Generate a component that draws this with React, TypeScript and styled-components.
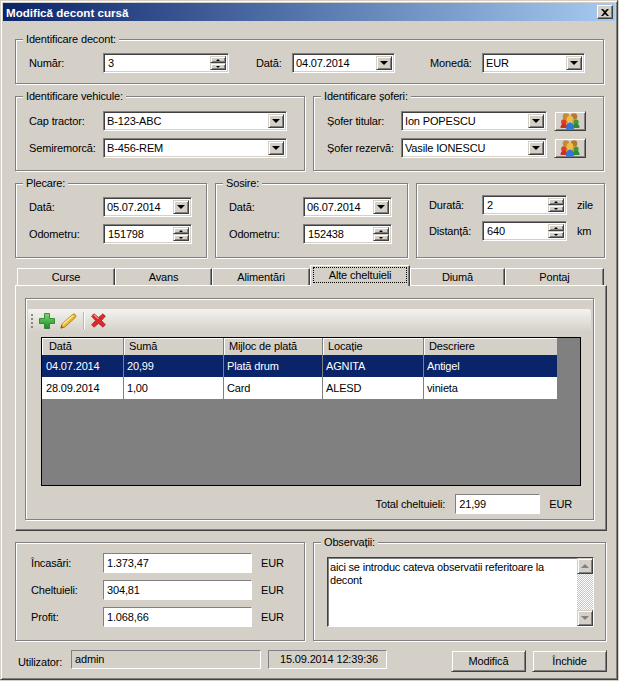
import React from 'react'
import styled, { createGlobalStyle } from 'styled-components'

const rows = [
  ['04.07.2014', '20,99', 'Plată drum', 'AGNITA', 'Antigel'],
  ['28.09.2014', '1,00', 'Card', 'ALESD', 'vinieta'],
]
const columns = ['Dată', 'Sumă', 'Mijloc de plată', 'Locație', 'Descriere']
const tabs = [
  { name: 'Curse', w: 98 },
  { name: 'Avans', w: 97 },
  { name: 'Alimentări', w: 98 },
  { name: 'Alte cheltuieli', w: 100, active: true },
  { name: 'Diumă', w: 95 },
  { name: 'Pontaj', w: 99 },
]

const SpinBox = ({ w, value }: { w: number; value: string }) => (
  <Field $w={w}>
    <FieldText $left={2}>{value}</FieldText>
    <SpinButtons>
      <SpinButton><Arrow $up /></SpinButton>
      <SpinButton><Arrow /></SpinButton>
    </SpinButtons>
  </Field>
)

const Combo = ({ w, value }: { w: number; value: string }) => (
  <Field $w={w}>
    <FieldText $left={1}>{value}</FieldText>
    <DropButton><DropArrow /></DropButton>
  </Field>
)

const PeopleIcon = () => (
  <svg width="20" height="18" viewBox="0 0 20 18">
    <circle cx="6" cy="4.500" r="3.300" fill="#c48a34" />
    <circle cx="14" cy="4.500" r="3.300" fill="#b27a2e" />
    <path d="M2 11c0-2.500 1.500-4 3.500-4H8v6H3z" fill="#e0a424" />
    <path d="M12 7h2.500c2 0 3.500 1.500 3.500 4l-1 2h-5z" fill="#d0a42a" />
    <circle cx="3.800" cy="10" r="2.700" fill="#de3d2c" />
    <path d="M.5 16c0-3 1.200-4.500 3.300-4.500S7.500 13 7.500 16z" fill="#cf2f22" />
    <circle cx="16.200" cy="10" r="2.500" fill="#3f9a3a" />
    <path d="M12.500 16c0-3 1.400-4.500 3.700-4.500S19.500 13 19.500 16z" fill="#2f8a32" />
    <circle cx="10" cy="7" r="3.200" fill="#f3bb4a" />
    <path d="M6 17.500c0-4.500 1.700-7 4-7s4 2.500 4 7z" fill="#2f78d8" />
  </svg>
)

const PlusIcon = () => (
  <svg width="16" height="16" viewBox="0 0 16 16">
    <defs>
      <linearGradient id="plusFill" x1="0" y1="0" x2="0" y2="1">
        <stop offset="0" stopColor="#7fd86a" />
        <stop offset="1" stopColor="#1a8a2a" />
      </linearGradient>
    </defs>
    <path
      d="M5.500 .5h5v5h5v5h-5v5h-5v-5h-5v-5h5z"
      fill="url(#plusFill)"
      stroke="#1f7a2c"
      strokeWidth=".8"
    />
  </svg>
)

const PencilIcon = () => (
  <svg width="17" height="16" viewBox="0 0 17 16">
    <path d="M.8 15.200l1-3.900L12.300 1.700c.9-.8 2.200-.8 3 0s.8 2 0 2.800L4.700 14.200z" fill="#eab92e" stroke="#a87e14" strokeWidth=".9" />
    <path d="M3 11.500L13 2.500" stroke="#fff2b0" strokeWidth="1.100" fill="none" />
    <path d="M.8 15.200l.7-2.700 1.900 2z" fill="#7a5a14" />
  </svg>
)

const DeleteIcon = () => (
  <svg width="15" height="15" viewBox="0 0 15 15">
    <path
      d="M3 .8L7.500 4.500 12 .8l2.400 2.400-3.900 4.300 3.900 4.300-2.400 2.400-4.500-3.700L3 14.200.6 11.800l3.900-4.300L.6 3.200z"
      fill="#dc2a2a"
      stroke="#b01c1c"
      strokeWidth=".7"
    />
    <path d="M3 2l4.500 3.800" stroke="#f49a9a" strokeWidth="1.100" fill="none" />
  </svg>
)

export default function App() {
  return (
    <>
      <GlobalStyle />
      <Window>
        <TitleBar>
          <span>Modifică decont cursă</span>
          <CloseButton>
            <svg width="8" height="7" viewBox="0 0 8 7">
              <path d="M0 0l2 0 2 2 2-2 2 0-3 3.500 3 3.500-2 0-2-2-2 2-2 0 3-3.500z" fill="#000" />
            </svg>
          </CloseButton>
        </TitleBar>
        <Content>
          <Row $top={18}>
            <Group $w={589} $h={45} $top={13}>
              <Legend>Identificare decont:</Legend>
              <FieldRow>
                <Label $w={74}>Număr:</Label>
                <SpinBox w={126} value="3" />
                <Label $w={36} $ml={27}>Dată:</Label>
                <Combo w={103} value="04.07.2014" />
                <Label $w={52} $ml={35}>Monedă:</Label>
                <Combo w={103} value="EUR" />
              </FieldRow>
            </Group>
          </Row>
          <Row $top={12}>
            <Group $w={290} $h={75} $top={14}>
              <Legend>Identificare vehicule:</Legend>
              <FieldRow>
                <Label $w={74}>Cap tractor:</Label>
                <Combo w={184} value="B-123-ABC" />
              </FieldRow>
              <FieldRow>
                <Label $w={74}>Semiremorcă:</Label>
                <Combo w={184} value="B-456-REM" />
              </FieldRow>
            </Group>
            <Group $w={291} $h={75} $top={14}>
              <Legend>Identificare șoferi:</Legend>
              <FieldRow>
                <Label $w={74}>Șofer titular:</Label>
                <Combo w={146} value="Ion POPESCU" />
                <PickButton><PeopleIcon /></PickButton>
              </FieldRow>
              <FieldRow>
                <Label $w={74}>Șofer rezervă:</Label>
                <Combo w={146} value="Vasile IONESCU" />
                <PickButton><PeopleIcon /></PickButton>
              </FieldRow>
            </Group>
          </Row>
          <Row $top={12}>
            <Group $w={192} $h={75} $top={13}>
              <Legend>Plecare:</Legend>
              <FieldRow>
                <Label $w={74}>Dată:</Label>
                <Combo w={89} value="05.07.2014" />
              </FieldRow>
              <FieldRow>
                <Label $w={74}>Odometru:</Label>
                <SpinBox w={89} value="151798" />
              </FieldRow>
            </Group>
            <Group $w={193} $h={75} $top={13}>
              <Legend>Sosire:</Legend>
              <FieldRow>
                <Label $w={74}>Dată:</Label>
                <Combo w={89} value="06.07.2014" />
              </FieldRow>
              <FieldRow>
                <Label $w={74}>Odometru:</Label>
                <SpinBox w={89} value="152438" />
              </FieldRow>
            </Group>
            <Group $w={189} $h={75} $top={11} $gap={6} $left={12}>
              <FieldRow>
                <Label $w={53}>Durată:</Label>
                <SpinBox w={85} value="2" />
                <Label $ml={10}>zile</Label>
              </FieldRow>
              <FieldRow>
                <Label $w={53}>Distanță:</Label>
                <SpinBox w={85} value="640" />
                <Label $ml={10}>km</Label>
              </FieldRow>
            </Group>
          </Row>
          <TabStrip>
            {tabs.map((t) => (
              <Tab key={t.name} $w={t.w} $active={t.active}>
                {t.active ? <FocusText>{t.name}</FocusText> : t.name}
              </Tab>
            ))}
          </TabStrip>
          <TabPage>
            <InnerGroup>
              <Toolbar>
                <Grip />
                <ToolIcon><PlusIcon /></ToolIcon>
                <ToolIcon><PencilIcon /></ToolIcon>
                <ToolSeparator />
                <ToolIcon><DeleteIcon /></ToolIcon>
              </Toolbar>
              <DataGrid>
                <GridRow>
                  {columns.map((c) => (
                    <HeadCell key={c}>{c}</HeadCell>
                  ))}
                </GridRow>
                {rows.map((r, i) => (
                  <GridRow key={r[0]}>
                    {r.map((v) => (
                      <Cell key={v} $selected={i === 0}>{v}</Cell>
                    ))}
                  </GridRow>
                ))}
              </DataGrid>
              <TotalRow>
                <Label>Total cheltuieli:</Label>
                <PlainField $w={85} $h={20} $ml={10}>21,99</PlainField>
                <Label $ml={9}>EUR</Label>
              </TotalRow>
            </InnerGroup>
          </TabPage>
          <Row $top={11}>
            <Group $w={290} $h={99} $top={10} $left={15}>
              <FieldRow>
                <Label $w={72}>Încasări:</Label>
                <PlainField $w={149} $h={20}>1.373,47</PlainField>
                <Label $ml={9}>EUR</Label>
              </FieldRow>
              <FieldRow>
                <Label $w={72}>Cheltuieli:</Label>
                <PlainField $w={149} $h={20}>304,81</PlainField>
                <Label $ml={9}>EUR</Label>
              </FieldRow>
              <FieldRow>
                <Label $w={72}>Profit:</Label>
                <PlainField $w={149} $h={20}>1.068,66</PlainField>
                <Label $ml={9}>EUR</Label>
              </FieldRow>
            </Group>
            <Group $w={293} $h={99} $top={14}>
              <Legend>Observații:</Legend>
              <TextArea>
                <TextAreaText>aici se introduc cateva observatii referitoare la decont</TextAreaText>
                <ScrollBar>
                  <ScrollButton><ScrollArrow $up /></ScrollButton>
                  <ScrollButton><ScrollArrow /></ScrollButton>
                </ScrollBar>
              </TextArea>
            </Group>
          </Row>
          <StatusRow>
            <Label $w={46}>Utilizator:</Label>
            <StatusField $w={190}>admin</StatusField>
            <StatusField $w={119} $center>15.09.2014 12:39:36</StatusField>
            <Buttons>
              <PushButton>Modifică</PushButton>
              <PushButton>Închide</PushButton>
            </Buttons>
          </StatusRow>
        </Content>
      </Window>
    </>
  )
}

const GlobalStyle = createGlobalStyle`
  * {
    box-sizing: border-box;
  }
  body {
    margin: 0;
    font-family: 'Liberation Sans', Arial, sans-serif;
    font-size: 11px;
    letter-spacing: -0.150px;
    color: #000;
    background: #d4d0c8;
  }
`

const Window = styled.div`
  width: 618px;
  height: 680px;
  padding: 2px;
  background: #d4d0c8;
  border: 1px solid;
  border-color: #d4d0c8 #404040 #404040 #d4d0c8;
  box-shadow: inset 1px 1px #fff, inset -1px -1px #808080;
  overflow: hidden;
`

const TitleBar = styled.div`
  height: 18px;
  padding: 0 2px 0 3px;
  display: flex;
  align-items: center;
  justify-content: space-between;
  background: linear-gradient(90deg, #0a246a, #a6caf0);
  color: #fff;
  font-size: 11.600px;
  font-weight: bold;
  letter-spacing: 0;
`

const CloseButton = styled.div`
  width: 16px;
  height: 14px;
  display: flex;
  align-items: center;
  justify-content: center;
  background: #d4d0c8;
  border: 1px solid;
  border-color: #fff #404040 #404040 #fff;
  box-shadow: inset -1px -1px #808080;
`

const Content = styled.div`
  padding-left: 12px;
`

const Row = styled.div<{ $top: number }>`
  display: flex;
  gap: 8px;
  margin-top: ${({ $top }) => $top}px;
`

const Group = styled.div<{ $w: number; $h: number; $top: number; $gap?: number; $left?: number }>`
  position: relative;
  width: ${({ $w }) => $w}px;
  height: ${({ $h }) => $h}px;
  padding: ${({ $top }) => $top}px 0 0 ${({ $left }) => $left ?? 13}px;
  display: flex;
  flex-direction: column;
  gap: ${({ $gap }) => $gap ?? 7}px;
  border: 1px solid #808080;
  box-shadow: inset 1px 1px #fff, 1px 1px #fff;
`

const Legend = styled.span`
  position: absolute;
  top: -7px;
  left: 7px;
  padding: 0 3px;
  background: #d4d0c8;
  line-height: 13px;
`

const FieldRow = styled.div`
  display: flex;
  align-items: center;
`

const Label = styled.span<{ $w?: number; $ml?: number }>`
  flex: none;
  width: ${({ $w }) => ($w ? `${$w}px` : 'auto')};
  margin-left: ${({ $ml }) => $ml ?? 0}px;
  white-space: nowrap;
`

const Field = styled.div<{ $w: number }>`
  flex: none;
  width: ${({ $w }) => $w}px;
  height: 20px;
  padding: 2px;
  display: flex;
  align-items: stretch;
  background: #fff;
  border: 1px solid;
  border-color: #808080 #fff #fff #808080;
  box-shadow: inset 1px 1px #404040, inset -1px -1px #d4d0c8;
`

const FieldText = styled.span<{ $left: number }>`
  flex: 1;
  padding-left: ${({ $left }) => $left}px;
  line-height: 15px;
  white-space: nowrap;
`

const raised = `
  background: #d4d0c8;
  border: 1px solid;
  border-color: #d4d0c8 #404040 #404040 #d4d0c8;
  box-shadow: inset 1px 1px #fff, inset -1px -1px #808080;
`

const DropButton = styled.div`
  ${raised}
  flex: none;
  width: 16px;
  display: flex;
  align-items: center;
  justify-content: center;
`

const DropArrow = styled.i`
  border: 4px solid transparent;
  border-top-color: #000;
  border-bottom: 0;
`

const SpinButtons = styled.div`
  flex: none;
  width: 16px;
  display: flex;
  flex-direction: column;
`

const SpinButton = styled.div`
  ${raised}
  flex: 1;
  display: flex;
  align-items: center;
  justify-content: center;
`

const Arrow = styled.i<{ $up?: boolean }>`
  border: 2px solid transparent;
  ${({ $up }) => ($up ? 'border-bottom-color: #000; border-top: 0;' : 'border-top-color: #000; border-bottom: 0;')}
`

const PickButton = styled.div`
  ${raised}
  flex: none;
  width: 32px;
  height: 20px;
  margin-left: 7px;
  display: flex;
  align-items: center;
  justify-content: center;
`

const TabStrip = styled.div`
  position: relative;
  z-index: 1;
  height: 20px;
  margin-top: 7px;
  padding-left: 2px;
  display: flex;
  align-items: flex-end;
`

const Tab = styled.div<{ $w: number; $active?: boolean }>`
  width: ${({ $w }) => $w}px;
  height: ${({ $active }) => ($active ? 21 : 17)}px;
  margin-bottom: ${({ $active }) => ($active ? -1 : 0)}px;
  display: flex;
  align-items: center;
  justify-content: center;
  background: #d4d0c8;
  border-top: 1px solid #fff;
  border-left: 1px solid #fff;
  border-right: 1px solid #404040;
  box-shadow: inset -1px 0 #808080;
`

const FocusText = styled.span`
  width: 94px;
  height: 16px;
  margin-bottom: 2px;
  text-align: center;
  line-height: 14px;
  border: 1px dotted #000;
`

const TabPage = styled.div`
  width: 592px;
  height: 246px;
  padding: 12px 0 0 9px;
  border: 1px solid;
  border-color: #fff #404040 #404040 #fff;
  box-shadow: inset -1px -1px #808080;
`

const InnerGroup = styled.div`
  width: 569px;
  height: 222px;
  padding: 10px 2px 0;
  border: 1px solid #808080;
  box-shadow: inset 1px 1px #fff, 1px 1px #fff;
`

const Toolbar = styled.div`
  height: 23px;
  padding-left: 3px;
  display: flex;
  align-items: center;
  gap: 5px;
  border-radius: 0 3px 0 0;
  background: linear-gradient(#f4f3ef, #d4d0c8);
`

const Grip = styled.i`
  width: 2px;
  height: 14px;
  margin-right: 1px;
  background: repeating-linear-gradient(#8a8880 0 2px, transparent 2px 4px);
`

const ToolIcon = styled.span`
  display: flex;
`

const ToolSeparator = styled.i`
  width: 1px;
  height: 17px;
  margin: 0 2px 0 1px;
  background: #b8b4ac;
  box-shadow: 1px 0 #fff;
`

const DataGrid = styled.div`
  width: 540px;
  height: 149px;
  margin: 5px 0 0 13px;
  background: #808080;
  border: 1px solid #000;
`

const GridRow = styled.div`
  display: grid;
  grid-template-columns: 82px 100px 99px 101px 134px;
  width: 516px;
`

const HeadCell = styled.div`
  height: 17px;
  padding: 0 5px;
  line-height: 17px;
  background: #d4d0c8;
  border-right: 1px solid #808080;
  box-shadow: inset 1px 1px #fff;

  &:first-child {
    padding-left: 7px;
  }
`

const Cell = styled.div<{ $selected: boolean }>`
  height: 22px;
  padding: 0 3px;
  line-height: 22px;
  background: ${({ $selected }) => ($selected ? '#0a246a' : '#fff')};
  color: ${({ $selected }) => ($selected ? '#fff' : '#000')};
  border-right: 1px solid #808080;

  &:first-child {
    padding-left: 4px;
  }
`

const TotalRow = styled.div`
  margin: 8px 0 0 0;
  padding-right: 19px;
  display: flex;
  justify-content: flex-end;
  align-items: center;
`

const PlainField = styled.div<{ $w: number; $h: number; $ml?: number }>`
  flex: none;
  width: ${({ $w }) => $w}px;
  height: ${({ $h }) => $h}px;
  margin-left: ${({ $ml }) => $ml ?? 0}px;
  padding-left: 3px;
  line-height: 18px;
  background: #fff;
  border: 1px solid;
  border-color: #808080 #fff #fff #808080;
`

const TextArea = styled.div`
  width: 267px;
  height: 70px;
  display: flex;
  background: #fff;
  border: 1px solid;
  border-color: #404040 #fff #fff #404040;
  box-shadow: inset 1px 1px #808080;
`

const TextAreaText = styled.div`
  flex: 1;
  padding: 3px 10px 0 2px;
  line-height: 13px;
  letter-spacing: -0.200px;
`

const ScrollBar = styled.div`
  flex: none;
  width: 16px;
  display: flex;
  flex-direction: column;
  justify-content: space-between;
  background: repeating-conic-gradient(#fff 0 25%, #c8c4bc 0 50%) 0 0 / 2px 2px;
`

const ScrollButton = styled.div`
  ${raised}
  height: 16px;
  display: flex;
  align-items: center;
  justify-content: center;
`

const ScrollArrow = styled.i<{ $up?: boolean }>`
  border: 4px solid transparent;
  ${({ $up }) => ($up ? 'border-bottom-color: #808080; border-top: 0;' : 'border-top-color: #808080; border-bottom: 0;')}
`

const StatusRow = styled.div`
  margin-top: 9px;
  padding-left: 3px;
  display: flex;
  align-items: flex-start;
  gap: 7px;
  line-height: 24px;
`

const StatusField = styled.div<{ $w: number; $center?: boolean }>`
  flex: none;
  width: ${({ $w }) => $w}px;
  height: 19px;
  padding-left: 3px;
  line-height: 16px;
  text-align: ${({ $center }) => ($center ? 'center' : 'left')};
  border: 1px solid;
  border-color: #808080 #fff #fff #808080;
`

const Buttons = styled.div`
  margin-left: 57px;
  display: flex;
  gap: 6px;
`

const PushButton = styled.div`
  ${raised}
  width: 75px;
  height: 22px;
  text-align: center;
  line-height: 20px;
`
